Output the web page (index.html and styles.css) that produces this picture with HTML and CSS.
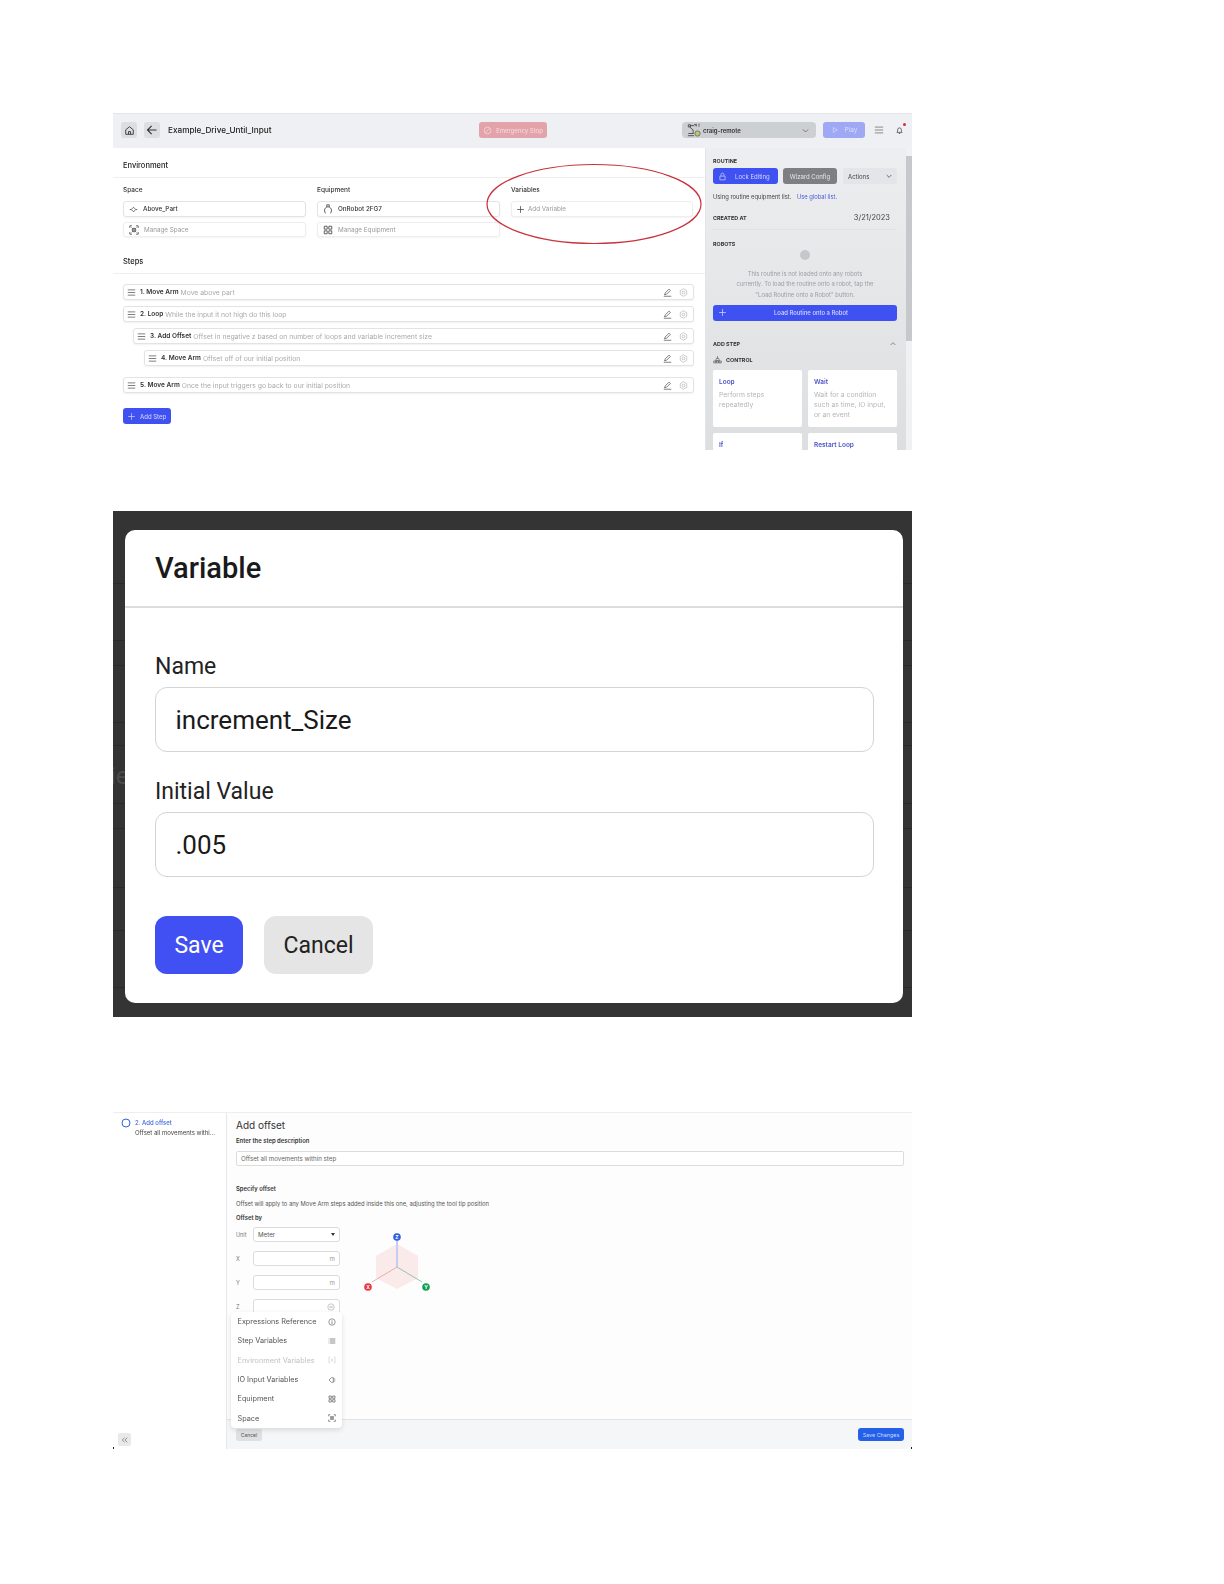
FILE: index.html
```html
<!DOCTYPE html>
<html lang="en">
<head>
<meta charset="utf-8">
<title>Example_Drive_Until_Input</title>
<link rel="stylesheet" href="styles.css">
</head>
<body>
<svg class="sprite" width="0" height="0" aria-hidden="true">
  <symbol id="i-home" viewBox="0 0 16 16"><path d="M2.500 7 8 2.500 13.500 7v6.500h-11zM6.500 13.500v-4h3v4" fill="none" stroke="currentColor" stroke-width="1.300" stroke-linejoin="round"/></symbol>
  <symbol id="i-back" viewBox="0 0 16 16"><path d="M14 8H2.500M7.500 2.500 2 8l5.500 5.500" fill="none" stroke="currentColor" stroke-width="1.500"/></symbol>
  <symbol id="i-stop" viewBox="0 0 16 16"><circle cx="8" cy="8" r="6" fill="none" stroke="currentColor" stroke-width="1.200"/><path d="m3.800 12.200 8.400-8.400" stroke="currentColor" stroke-width="1.200"/></symbol>
  <symbol id="i-robot" viewBox="0 0 16 16"><g fill="none" stroke="#444" stroke-width="1"><path d="M1.500 2h2.500v2.500H1.500zM3 4.500 7 8M8 2h2.500M4 3h4M10.500 1v3M13 1.500h1.500M13 3.500h1.500M7 8v4M1.500 12h6M1 14.500h7"/></g><circle cx="12" cy="12" r="3" fill="#b9c96f" stroke="#555" stroke-width=".8"/></symbol>
  <symbol id="i-chev" viewBox="0 0 12 12"><path d="m2.500 4.500 3.500 3.500 3.500-3.500" fill="none" stroke="currentColor" stroke-width="1.100"/></symbol>
  <symbol id="i-up" viewBox="0 0 12 12"><path d="m2.500 7.500 3.500-3.500 3.500 3.500" fill="none" stroke="currentColor" stroke-width="1.100"/></symbol>
  <symbol id="i-play" viewBox="0 0 12 12"><path d="M3.500 2.200v7.600L9.500 6z" fill="none" stroke="currentColor" stroke-width="1"/></symbol>
  <symbol id="i-menu" viewBox="0 0 12 12"><path d="M1 2.500h10M1 6h10M1 9.500h10" stroke="currentColor" stroke-width="1"/></symbol>
  <symbol id="i-bell" viewBox="0 0 12 12"><path d="M2.500 8.500h7L8.500 7V5A2.500 2.500 0 0 0 3.500 5v2zM5 10h2" fill="none" stroke="currentColor" stroke-width="1"/></symbol>
  <symbol id="i-place" viewBox="0 0 12 12"><path d="M6 3 9 6 6 9 3 6zM1 6h2M9 6h2" fill="none" stroke="currentColor" stroke-width=".9"/></symbol>
  <symbol id="i-grip" viewBox="0 0 12 12"><path d="M4.500 1h3v2.500h-3zM4.500 3.500 2 6v4M7.500 3.500 10 6v4M2 10l1.500 1M10 10l-1.500 1" fill="none" stroke="currentColor" stroke-width=".9"/></symbol>
  <symbol id="i-scan" viewBox="0 0 12 12"><path d="M1 3.500V1h2.500M8.500 1H11v2.500M11 8.500V11H8.500M3.500 11H1V8.500" fill="none" stroke="currentColor" stroke-width="1"/><circle cx="6" cy="6" r="2.200" fill="none" stroke="currentColor" stroke-width="1"/><path d="m3 3 6 6M9 3 3 9" stroke="currentColor" stroke-width=".7"/></symbol>
  <symbol id="i-grid" viewBox="0 0 12 12"><path d="M1.500 1.500h3.500V5H1.500zM7 1.500h3.500V5H7zM1.500 7H5v3.500H1.500zM7 7h3.500v3.500H7z" fill="none" stroke="currentColor" stroke-width="1"/></symbol>
  <symbol id="i-plus" viewBox="0 0 12 12"><path d="M6 1.500v9M1.500 6h9" stroke="currentColor" stroke-width="1"/></symbol>
  <symbol id="i-pen" viewBox="0 0 12 12"><path d="M2 9 3 6.500 8 1.500l1.800 1.800-5 5zM1 11h10" fill="none" stroke="currentColor" stroke-width=".9"/></symbol>
  <symbol id="i-gear" viewBox="0 0 12 12"><path d="M6 1 10.300 3.500v5L6 11 1.700 8.500v-5z" fill="none" stroke="currentColor" stroke-width=".8"/><circle cx="6" cy="6" r="1.800" fill="none" stroke="currentColor" stroke-width=".8"/></symbol>
  <symbol id="i-lock" viewBox="0 0 12 12"><path d="M2.500 5.500h7v5h-7zM4 5.500V3.500a2 2 0 0 1 4 0v2" fill="none" stroke="currentColor" stroke-width=".9"/></symbol>
  <symbol id="i-ctrl" viewBox="0 0 12 12"><path d="M6 1.500v3M4.500 4.500h3l1 3h-5zM1 10.500h3V8H1zM4.500 10.500h3V8h-3zM8 10.500h3V8H8z" fill="none" stroke="currentColor" stroke-width=".9"/></symbol>
  <symbol id="i-info" viewBox="0 0 12 12"><circle cx="6" cy="6" r="4.800" fill="none" stroke="currentColor" stroke-width=".9"/><path d="M6 5v4M6 3v1" stroke="currentColor" stroke-width="1"/></symbol>
  <symbol id="i-list" viewBox="0 0 12 12"><path d="M1 3h1M3 3h8M1 6h1M3 6h8M1 9h1M3 9h8" stroke="currentColor" stroke-width="1"/></symbol>
  <symbol id="i-vars" viewBox="0 0 12 12"><path d="M3 1.500H1.500v9H3M9 1.500h1.500v9H9M4.200 4l3.600 4.500M7.800 4 4.200 8.500" fill="none" stroke="currentColor" stroke-width=".8"/></symbol>
  <symbol id="i-plug" viewBox="0 0 12 12"><path d="M8 2.500H5L1.500 6 5 9.500h3zM8 4.500h3M8 7.500h3" fill="none" stroke="currentColor" stroke-width=".9"/></symbol>
  <symbol id="i-dbl" viewBox="0 0 12 12"><path d="M5.500 2.500 2 6l3.500 3.500M9.500 2.500 6 6l3.500 3.500" fill="none" stroke="currentColor" stroke-width="1"/></symbol>
  <symbol id="i-expr" viewBox="0 0 12 12"><circle cx="6" cy="6" r="4.800" fill="none" stroke="currentColor" stroke-width=".8"/><path d="M3.500 5h5M3.500 7h5" stroke="currentColor" stroke-width=".7"/></symbol>
</svg>

<main class="page">

  <section class="shot shot-editor">
    <header class="topbar">
      <button class="icon-btn"><svg class="ico-11"><use href="#i-home"/></svg></button>
      <button class="icon-btn back-btn"><svg class="ico-12"><use href="#i-back"/></svg></button>
      <h1 class="routine-name">Example_Drive_Until_Input</h1>
      <button class="estop"><svg class="ico-9"><use href="#i-stop"/></svg>Emergency Stop</button>
      <div class="robot-select"><svg class="ico-14"><use href="#i-robot"/></svg><span class="robot-name">craig-remote</span><svg class="ico-9 select-chev"><use href="#i-chev"/></svg></div>
      <button class="play"><svg class="ico-8"><use href="#i-play"/></svg>Play</button>
      <svg class="ico-10 top-menu"><use href="#i-menu"/></svg>
      <span class="bell"><svg class="ico-9"><use href="#i-bell"/></svg><i class="bell-dot"></i></span>
    </header>
    <div class="editor-body">
      <div class="editor-main">
        <h2 class="section-title">Environment</h2>
        <div class="env-grid">
          <div class="env-col">
            <span class="env-label">Space</span>
            <div class="field strong"><svg class="ico-9"><use href="#i-place"/></svg>Above_Part</div>
            <div class="field muted"><svg class="ico-10 dark"><use href="#i-scan"/></svg>Manage Space</div>
          </div>
          <div class="env-col">
            <span class="env-label">Equipment</span>
            <div class="field strong"><svg class="ico-10"><use href="#i-grip"/></svg>OnRobot 2FG7</div>
            <div class="field muted"><svg class="ico-10 dark"><use href="#i-grid"/></svg>Manage Equipment</div>
          </div>
          <div class="env-col">
            <span class="env-label">Variables</span>
            <div class="field muted add-var"><svg class="ico-9 dark"><use href="#i-plus"/></svg>Add Variable</div>
          </div>
        </div>
        <h2 class="section-title steps-title">Steps</h2>
        <ol class="steps">
          <li class="step"><svg class="ico-9"><use href="#i-menu"/></svg><b>1. Move Arm</b><span>Move above part</span><svg class="ico-9 step-edit"><use href="#i-pen"/></svg><svg class="ico-9 step-gear"><use href="#i-gear"/></svg></li>
          <li class="step"><svg class="ico-9"><use href="#i-menu"/></svg><b>2. Loop</b><span>While the input it not high do this loop</span><svg class="ico-9 step-edit"><use href="#i-pen"/></svg><svg class="ico-9 step-gear"><use href="#i-gear"/></svg></li>
          <li class="step level-1"><svg class="ico-9"><use href="#i-menu"/></svg><b>3. Add Offset</b><span>Offset in negative z based on number of loops and variable increment size</span><svg class="ico-9 step-edit"><use href="#i-pen"/></svg><svg class="ico-9 step-gear"><use href="#i-gear"/></svg></li>
          <li class="step level-2"><svg class="ico-9"><use href="#i-menu"/></svg><b>4. Move Arm</b><span>Offset off of our initial position</span><svg class="ico-9 step-edit"><use href="#i-pen"/></svg><svg class="ico-9 step-gear"><use href="#i-gear"/></svg></li>
          <li class="step step-after"><svg class="ico-9"><use href="#i-menu"/></svg><b>5. Move Arm</b><span>Once the input triggers go back to our initial position</span><svg class="ico-9 step-edit"><use href="#i-pen"/></svg><svg class="ico-9 step-gear"><use href="#i-gear"/></svg></li>
        </ol>
        <button class="add-step"><svg class="ico-9"><use href="#i-plus"/></svg>Add Step</button>
      </div>
      <aside class="editor-side">
        <div class="side-content">
          <div class="side-label">ROUTINE</div>
          <div class="routine-actions">
            <button class="lock-btn"><svg class="ico-9"><use href="#i-lock"/></svg><span>Lock Editing</span></button>
            <button class="wizard-btn">Wizard Config</button>
            <button class="actions-btn">Actions<svg class="ico-8"><use href="#i-chev"/></svg></button>
          </div>
          <p class="equip-note">Using routine equipment list. <a class="link">Use global list.</a></p>
          <div class="created"><span class="side-label">CREATED AT</span><span class="created-date">3/21/2023</span></div>
          <div class="side-label robots-label">ROBOTS</div>
          <div class="robot-dot"></div>
          <p class="robots-note">This routine is not loaded onto any robots<br>currently. To load the routine onto a robot, tap the<br>"Load Routine onto a Robot" button.</p>
          <button class="load-btn"><svg class="ico-9"><use href="#i-plus"/></svg><span>Load Routine onto a Robot</span></button>
          <div class="add-head"><span class="side-label">ADD STEP</span><svg class="ico-8"><use href="#i-up"/></svg></div>
          <div class="control-head"><svg class="ico-9"><use href="#i-ctrl"/></svg><span class="side-label">CONTROL</span></div>
          <div class="cards">
            <div class="card"><h3>Loop</h3><p>Perform steps repeatedly</p></div>
            <div class="card"><h3>Wait</h3><p>Wait for a condition such as time, IO input, or an event</p></div>
            <div class="card"><h3>If</h3></div>
            <div class="card"><h3>Restart Loop</h3></div>
          </div>
        </div>
        <div class="scroll-track"><div class="scroll-thumb"></div></div>
      </aside>
      <svg class="callout" width="220" height="84" viewBox="0 0 220 84"><ellipse cx="110" cy="42" rx="107" ry="39.500" fill="none" stroke="#c8323c" stroke-width="1.200"/></svg>
    </div>
  </section>

  <section class="shot shot-dialog">
    <span class="behind-text">ie</span>
    <div class="modal">
      <h2 class="modal-title">Variable</h2>
      <div class="modal-body">
        <label class="modal-label">Name</label>
        <div class="modal-input">increment_Size</div>
        <label class="modal-label second">Initial Value</label>
        <div class="modal-input">.005</div>
        <div class="modal-actions">
          <button class="save-btn">Save</button>
          <button class="cancel-btn">Cancel</button>
        </div>
      </div>
    </div>
  </section>

  <section class="shot shot-offset">
    <aside class="offset-side">
      <div class="side-step">
        <svg class="step-ring" width="10" height="10" viewBox="0 0 10 10"><circle cx="5" cy="5" r="4" fill="none" stroke="#2f62e0" stroke-width="1"/></svg>
        <div class="side-step-text"><span class="side-step-name">2. Add offset</span><span class="side-step-desc">Offset all movements withi...</span></div>
      </div>
      <button class="collapse"><svg class="ico-8"><use href="#i-dbl"/></svg></button>
    </aside>
    <div class="offset-main">
      <div class="offset-content">
        <h2 class="offset-title">Add offset</h2>
        <div class="offset-strong desc-label">Enter the step description</div>
        <div class="desc-input">Offset all movements within step</div>
        <div class="offset-strong specify">Specify offset</div>
        <p class="offset-help">Offset will apply to any Move Arm steps added inside this one, adjusting the tool tip position</p>
        <div class="offset-strong by">Offset by</div>
        <div class="offset-form">
          <div class="offset-fields">
            <div class="f-row"><span class="f-label">Unit</span><div class="f-input select">Meter<i class="caret"></i></div></div>
            <div class="f-row"><span class="f-label">X</span><div class="f-input unit">m</div></div>
            <div class="f-row"><span class="f-label">Y</span><div class="f-input unit">m</div></div>
            <div class="f-row"><span class="f-label">Z</span><div class="f-input unit"><svg class="ico-8"><use href="#i-expr"/></svg></div></div>
          </div>
          <svg class="axes" width="76" height="70" viewBox="0 0 76 70">
            <polygon points="37,12 58,24 58,46 37,57 16,46 16,24" fill="#fbeaea"/>
            <path d="M37 35V8" stroke="#c6ccf2" stroke-width="2"/>
            <path d="M37 35 12 50" stroke="#e99a9e" stroke-width=".8"/>
            <path d="M37 35 62 50" stroke="#7dbb95" stroke-width=".8"/>
            <circle cx="37" cy="5" r="3.800" fill="#2f5fdc"/>
            <circle cx="8" cy="55" r="3.800" fill="#e8343e"/>
            <circle cx="66" cy="55" r="3.800" fill="#12a150"/>
            <text class="axis-text" x="37" y="6.700">Z</text>
            <text class="axis-text" x="8" y="56.700">X</text>
            <text class="axis-text" x="66" y="56.700">Y</text>
          </svg>
        </div>
      </div>
      <footer class="offset-footer">
        <button class="f-cancel">Cancel</button>
        <button class="f-save">Save Changes</button>
      </footer>
    </div>
    <ul class="expr-menu">
      <li>Expressions Reference<svg class="ico-8"><use href="#i-info"/></svg></li>
      <li>Step Variables<svg class="ico-8"><use href="#i-list"/></svg></li>
      <li class="off">Environment Variables<svg class="ico-8"><use href="#i-vars"/></svg></li>
      <li>IO Input Variables<svg class="ico-8"><use href="#i-plug"/></svg></li>
      <li>Equipment<svg class="ico-8"><use href="#i-grid"/></svg></li>
      <li>Space<svg class="ico-8"><use href="#i-scan"/></svg></li>
    </ul>
    <i class="corner corner-l"></i><i class="corner corner-r"></i>
  </section>
</main>
</body>
</html>
```

FILE: styles.css
```css
* { box-sizing: border-box; }
html, body { margin: 0; padding: 0; background: #fff; }
body { font-family: Inter, "Liberation Sans", sans-serif; color: #222; }
button { font: inherit; border: 0; padding: 0; }
h1, h2, h3, p, ol, ul { margin: 0; padding: 0; }
ol, ul { list-style: none; }
.sprite { position: absolute; }

.ico-8 { width: 8px; height: 8px; flex: none; }
.ico-9 { width: 9px; height: 9px; flex: none; }
.ico-10 { width: 10px; height: 10px; flex: none; }
.ico-11 { width: 11px; height: 11px; flex: none; }
.ico-12 { width: 12px; height: 12px; flex: none; }
.ico-14 { width: 14px; height: 14px; flex: none; }

.page { width: 799px; margin-left: 113px; padding-top: 113px; display: flex; flex-direction: column; }
.shot { position: relative; width: 799px; }

/* Screenshot 1 */
.shot-editor { height: 337px; overflow: hidden; filter: blur(.45px); display: flex; flex-direction: column; }
.topbar { height: 35px; flex: none; background: #eef0f3; border-top: 1px solid #e4e6e8; display: flex; align-items: center; padding: 0 8px 2px; }
.icon-btn { width: 16px; height: 16px; border-radius: 3px; background: #dcdee1; color: #333; display: flex; align-items: center; justify-content: center; }
.back-btn { margin-left: 7px; }
.routine-name { margin-left: 8px; width: 311px; font-size: 8.200px; font-weight: 500; color: #222; white-space: nowrap; }
.estop { width: 68px; height: 16px; border-radius: 3px; background: #e3a3aa; color: #f6dcdf; font-size: 6px; display: flex; align-items: center; justify-content: center; gap: 4px; }
.robot-select { margin-left: 135px; width: 134px; height: 16px; border-radius: 4px; background: #cdd0d3; display: flex; align-items: center; padding: 0 6px 0 5px; font-size: 6px; font-weight: 600; color: #333; }
.robot-name { margin-left: 2px; flex: 1; }
.select-chev { color: #666; }
.play { margin-left: 7px; width: 42px; height: 16px; border-radius: 3px; background: #9fa8f5; color: #d8dcfb; font-size: 6.500px; display: flex; align-items: center; justify-content: center; gap: 6px; }
.top-menu { margin-left: 9px; color: #777; }
.bell { position: relative; margin-left: 11px; display: flex; color: #444; }
.bell-dot { position: absolute; top: -3px; right: -2px; width: 3px; height: 3px; border-radius: 50%; background: #d42b3f; }

.editor-body { position: relative; flex: 1; display: flex; min-height: 0; }
.editor-main { width: 592px; flex: none; background: #fff; }
.section-title { height: 30px; padding: 6px 0 0 10px; display: flex; align-items: center; font-size: 7.500px; font-weight: 500; color: #222; border-bottom: 1px solid #eeeeef; }
.env-grid { display: grid; grid-template-columns: 183px 183px 182px; column-gap: 11px; padding: 0 0 0 10px; }
.env-col { display: flex; flex-direction: column; }
.env-label { margin-top: 7px; height: 10px; line-height: 10px; font-size: 6.500px; font-weight: 500; color: #333; }
.field { height: 16px; margin-top: 6px; border: 1px solid #e4e4e6; border-radius: 3px; box-shadow: 0 1px 2px rgba(0,0,0,.05); display: flex; align-items: center; gap: 5px; padding-left: 5px; font-size: 6.300px; background: #fff; }
.field.strong { color: #333; font-weight: 500; }
.field.muted { color: #999; margin-top: 5px; height: 15px; border-color: #eeeeef; }
.field.add-var { margin-top: 6px; height: 16px; gap: 3px; padding-left: 4px; }
.dark { color: #444; }
.steps-title { height: 37px; padding-top: 13px; }
.steps { padding: 10px 11px 0 10px; }
.step { height: 16px; margin-bottom: 6px; border: 1px solid #e3e3e5; border-radius: 3px; box-shadow: 0 1px 2px rgba(0,0,0,.06); display: flex; align-items: center; padding-left: 3px; font-size: 6.800px; color: #aaa; white-space: nowrap; background: #fff; }
.step b { margin-left: 4px; margin-right: 2px; font-size: 6.500px; font-weight: 600; color: #333; }
.step > svg:first-child { color: #555; }
.step-edit { margin-left: auto; color: #444; }
.step-gear { margin-left: 7px; margin-right: 5px; color: #aaa; }
.level-1 { margin-left: 10px; }
.level-2 { margin-left: 21px; }
.step-after { margin-top: 11px; }
.add-step { margin: 15px 0 0 10px; width: 48px; height: 16px; border-radius: 3px; background: #3f51f0; color: #c9cdfb; font-size: 6px; font-weight: 500; display: flex; align-items: center; padding-left: 4px; gap: 4px; }

.editor-side { flex: 1; display: flex; background: linear-gradient(#eceef0, #dcdee0); min-width: 0; overflow: hidden; border-left: 1px solid #e2e4e7; }
.side-content { width: 200px; flex: none; padding: 9px 0 0 7px; font-size: 6px; color: #333; }
.side-label { display: block; line-height: 8px; font-size: 5.400px; font-weight: 700; color: #333; }
.routine-actions { display: flex; margin-top: 3px; width: 184px; }
.lock-btn { width: 65px; height: 16px; border-radius: 3px; background: #3f51f0; color: #d4d7fb; font-size: 6px; display: flex; align-items: center; padding-left: 5px; gap: 8px; }
.wizard-btn { margin-left: 5px; width: 54px; height: 16px; border-radius: 3px; background: #7d7f82; color: #e7e7e8; font-size: 6px; }
.actions-btn { margin-left: 6px; width: 54px; height: 16px; background: #e3e5e8; border-radius: 3px; color: #444; font-size: 6px; display: flex; align-items: center; justify-content: space-between; padding: 0 4px 0 5px; }
.equip-note { margin-top: 9px; line-height: 8px; font-size: 5.800px; color: #444; white-space: nowrap; }
.link { margin-left: 4px; color: #4c58d8; }
.created { margin-top: 12px; width: 184px; height: 17px; padding-bottom: 7px; display: flex; justify-content: space-between; align-items: center; border-bottom: 1px solid #dfe1e4; }
.created-date { padding-right: 7px; font-size: 7.500px; color: #444; }
.robots-label { margin-top: 10px; }
.robot-dot { margin: 2px auto 0 87px; width: 10px; height: 10px; border-radius: 50%; background: #c5c7ca; }
.robots-note { margin-top: 9px; width: 184px; line-height: 10.300px; text-align: center; font-size: 5.850px; color: #9c9ea2; white-space: nowrap; }
.load-btn { position: relative; display: block; margin-top: 5px; width: 184px; height: 16px; padding-left: 12px; border-radius: 3px; background: #3f51f0; color: #d7dafc; font-size: 5.900px; font-weight: 500; text-align: center; }
.load-btn svg { position: absolute; left: 5px; top: 3px; }
.add-head { margin-top: 19px; width: 184px; display: flex; justify-content: space-between; align-items: center; color: #666; }
.control-head { margin-top: 7px; height: 10px; display: flex; align-items: center; gap: 4px; color: #555; }
.cards { margin-top: 5px; width: 184px; display: grid; grid-template-columns: 89px 89px; column-gap: 6px; row-gap: 6px; grid-auto-rows: 57px; }
.card { background: #fff; border-radius: 2px; padding: 8px 6px 0; }
.card h3 { font-size: 6.500px; font-weight: 600; color: #4b55c8; line-height: 9px; }
.card p { margin-top: 3px; font-size: 6.800px; line-height: 10.300px; color: #b5b6b9; }
.scroll-track { flex: 1; background: #f0f1f3; padding-top: 8px; }
.scroll-thumb { height: 185px; background: #c6c8cb; }
.callout { position: absolute; left: 371px; top: 14px; }

/* Screenshot 2 */
.shot-dialog { margin-top: 61px; height: 506px; padding: 19px 9px 14px 12px; background: #343434 linear-gradient(to bottom, transparent 72px, #2a2a2a 72px, #2a2a2a 73px, transparent 73px, transparent 129px, #2a2a2a 129px, #2a2a2a 130px, transparent 130px, transparent 154px, #2a2a2a 154px, #2a2a2a 155px, transparent 155px, transparent 211px, #2a2a2a 211px, #2a2a2a 212px, transparent 212px, transparent 234px, #2a2a2a 234px, #2a2a2a 235px, transparent 235px, transparent 292px, #2a2a2a 292px, #2a2a2a 293px, transparent 293px, transparent 317px, #2a2a2a 317px, #2a2a2a 318px, transparent 318px, transparent 376px, #2a2a2a 376px, #2a2a2a 377px, transparent 377px, transparent 419px, #2a2a2a 419px, #2a2a2a 420px, transparent 420px, transparent 476px, #2a2a2a 476px, #2a2a2a 477px, transparent 477px); overflow: hidden; font-family: Roboto, "Liberation Sans", sans-serif; }
.behind-text { position: absolute; left: -3px; top: 251px; font-size: 24px; line-height: 28px; color: #4c4c4c; }
.modal { position: relative; width: 778px; height: 473px; background: #fff; border-radius: 10px; }
.modal-title { height: 78px; padding-left: 30px; display: flex; align-items: center; font-size: 29px; font-weight: 500; color: #1a1a1a; border-bottom: 2px solid #dcdcdc; }
.modal-body { padding: 44px 29px 0 30px; }
.modal-label { display: block; height: 30px; line-height: 30px; font-size: 23px; color: #222; }
.modal-label.second { margin-top: 25px; }
.modal-input { margin-top: 5px; height: 65px; border: 1.500px solid #d4d4d4; border-radius: 12px; display: flex; align-items: center; padding-left: 19.500px; font-size: 26px; color: #1a1a1a; }
.modal-actions { margin-top: 39px; display: flex; gap: 21px; }
.save-btn { width: 88px; height: 58px; border-radius: 12px; background: #4150f2; color: #fff; font-size: 23px; }
.cancel-btn { width: 109px; height: 58px; border-radius: 12px; background: #e5e5e5; color: #222; font-size: 23px; }

/* Screenshot 3 */
.shot-offset { margin-top: 95px; height: 337px; display: flex; border-top: 1px solid #eceeef; filter: blur(.5px); font-size: 6.200px; color: #333; }
.offset-side { width: 114px; flex: none; display: flex; flex-direction: column; justify-content: space-between; border-right: 1px solid #e6e7e9; padding: 5px 0 3px 8px; }
.side-step { display: flex; gap: 4px; }
.step-ring { flex: none; margin-top: 0; }
.side-step-text { display: flex; flex-direction: column; line-height: 9.500px; white-space: nowrap; font-size: 6px; }
.side-step-name { color: #3b66dd; font-weight: 500; }
.side-step-desc { color: #444; }
.collapse { margin-left: -3px; width: 13px; height: 13px; border-radius: 2px; background: #e8e9eb; color: #666; display: flex; align-items: center; justify-content: center; }
.offset-main { flex: 1; display: flex; flex-direction: column; min-width: 0; }
.offset-content { flex: 1; background: #fdfdfd; padding: 6px 8px 0 9px; }
.offset-title { font-size: 10px; line-height: 13px; font-weight: 400; color: #333; }
.offset-strong { font-size: 5.900px; line-height: 8px; font-weight: 600; color: #333; }
.desc-label { margin-top: 5px; }
.desc-input { margin-top: 6px; height: 15px; border: 1px solid #dcdcde; border-radius: 2px; display: flex; align-items: center; padding-left: 4px; color: #666; background: #fff; }
.specify { margin-top: 19px; }
.offset-help { margin-top: 7px; line-height: 8px; font-size: 5.850px; color: #555; white-space: nowrap; }
.by { margin-top: 6px; }
.offset-form { display: flex; margin-top: 5px; }
.offset-fields { width: 104px; display: flex; flex-direction: column; gap: 9px; }
.f-row { display: flex; align-items: center; }
.f-label { width: 17px; color: #777; font-size: 5.500px; }
.f-input { width: 87px; height: 15px; border: 1px solid #dcdcde; border-radius: 3px; background: #fff; display: flex; align-items: center; color: #999; }
.select { justify-content: space-between; padding: 0 4px; color: #555; }
.caret { width: 0; height: 0; border-left: 2px solid transparent; border-right: 2px solid transparent; border-top: 3px solid #333; }
.unit { justify-content: flex-end; padding-right: 4px; }
.axes { margin: 5px 0 0 20px; flex: none; }
.axis-text { font-size: 5px; font-weight: 700; fill: #fff; text-anchor: middle; }
.offset-footer { flex: none; height: 30px; background: #f4f6f7; border-top: 1px solid #e2e3e5; display: flex; justify-content: space-between; align-items: center; padding: 0 8px 0 9px; }
.f-cancel { width: 26px; height: 12px; border-radius: 2px; background: #dfe0e2; color: #555; font-size: 5px; }
.f-save { width: 46px; height: 13px; border-radius: 3px; background: #2460e8; color: #cbd9fb; font-size: 5.400px; }
.expr-menu { position: absolute; left: 118px; top: 199px; width: 111px; height: 116px; background: #fff; border-radius: 4px; box-shadow: 0 2px 5px rgba(0,0,0,.12); font-size: 7.300px; color: #555; }
.expr-menu li { height: 19.300px; display: flex; align-items: center; justify-content: space-between; padding: 0 6px 0 6.500px; }
.expr-menu li.off { color: #c2c2c4; }
.corner { position: absolute; bottom: 0; width: 1px; height: 2px; background: #222; }
.corner-l { left: 0; }
.corner-r { right: 0; }
```
